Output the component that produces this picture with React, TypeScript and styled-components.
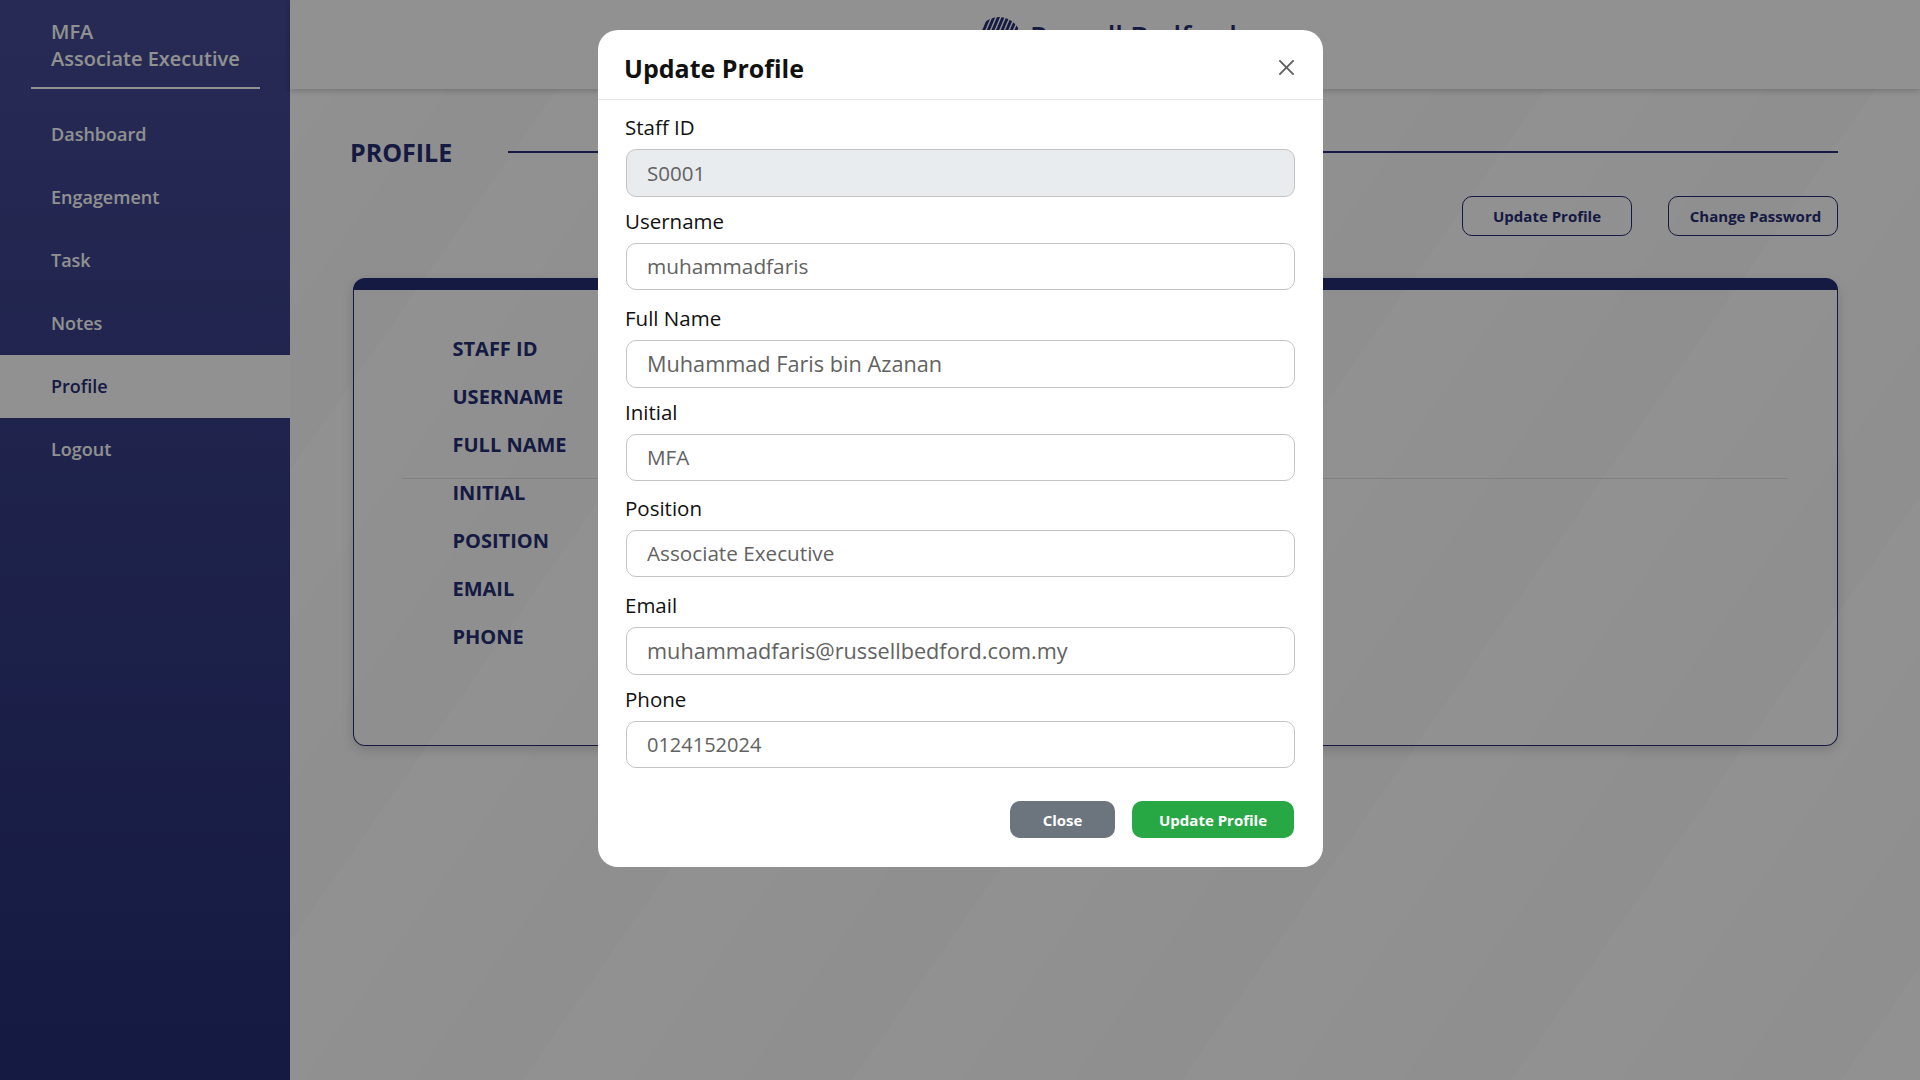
import React from 'react';
import styled, { createGlobalStyle } from 'styled-components';

const GlobalStyle = createGlobalStyle`
  * {
    box-sizing: border-box;
  }
  body {
    margin: 0;
    font-family: "Open Sans", "Noto Sans", sans-serif;
    background: #ffffff;
    overflow: hidden;
  }
`;

const NAVY = '#252e74';

const Shell = styled.div`
  display: flex;
  width: 1920px;
  height: 1080px;
`;

const Sidebar = styled.aside`
  flex: 0 0 290px;
  display: flex;
  flex-direction: column;
  background: linear-gradient(180deg, #444b95 0%, #252e74 100%);
`;

const UserBlock = styled.div`
  margin: 0 30px 0 31px;
  padding: 18px 20px 0;
  height: 89px;
  border-bottom: 2px solid #ffffff;
  color: #ffffff;
  font-size: 20px;
  font-weight: 600;
  line-height: 27px;
  white-space: nowrap;
`;

const Nav = styled.nav`
  display: flex;
  flex-direction: column;
  margin-top: 14px;
`;

const NavItem = styled.a<{ $active?: boolean }>`
  display: flex;
  align-items: center;
  height: 63px;
  padding: 0 0 2px 51px;
  font-size: 18px;
  font-weight: 600;
  color: ${props => (props.$active ? NAVY : '#ffffff')};
  background: ${props => (props.$active ? '#ffffff' : 'transparent')};
`;

const Main = styled.main`
  flex: 1;
  display: flex;
  flex-direction: column;
  background-color: #ffffff;
  background-image: repeating-linear-gradient(
    125deg,
    rgba(0, 0, 0, 0) 0,
    rgba(0, 0, 0, 0) 90px,
    rgba(0, 0, 0, 0.008) 90px,
    rgba(0, 0, 0, 0.008) 180px,
    rgba(0, 0, 0, 0.016) 180px,
    rgba(0, 0, 0, 0.016) 270px
  );
`;

const Header = styled.header`
  height: 89px;
  display: flex;
  justify-content: center;
  gap: 9px;
  padding: 17px 0 0 4px;
  background: #ffffff;
  box-shadow: 0 2px 6px rgba(0, 0, 0, 0.2);
`;

const BrandName = styled.span`
  font-size: 27.5px;
  line-height: 38px;
  font-weight: 600;
  color: ${NAVY};
  white-space: nowrap;
`;

const Content = styled.section`
  display: flex;
  flex-direction: column;
  padding: 44px 82px 0 60px;
`;

const TitleRow = styled.div`
  display: flex;
  align-items: center;
  height: 38px;
  gap: 56px;
`;

const PageTitle = styled.h1`
  margin: 0;
  font-size: 25px;
  font-weight: 700;
  color: ${NAVY};
`;

const TitleLine = styled.div`
  flex: 1;
  height: 2.5px;
  background: ${NAVY};
`;

const Actions = styled.div`
  display: flex;
  justify-content: flex-end;
  gap: 36px;
  margin-top: 25px;
`;

const OutlineButton = styled.button<{ $shift?: number }>`
  width: 170px;
  height: 40px;
  padding: 0 0 0 ${props => props.$shift ?? 0}px;
  border: 1.5px solid ${NAVY};
  border-radius: 10px;
  background: transparent;
  color: ${NAVY};
  font-family: inherit;
  font-size: 15px;
  font-weight: 700;
`;

const Card = styled.div`
  position: relative;
  margin: 42px 0 0 3px;
  height: 468px;
  padding: 35px 0 0 98.5px;
  border: 1.5px solid ${NAVY};
  border-top-width: 12px;
  border-radius: 12px;
  box-shadow: 0 4px 12px rgba(0, 0, 0, 0.15);
`;

const CardRule = styled.div`
  position: absolute;
  top: 188px;
  left: 48px;
  right: 49px;
  height: 1px;
  background: rgba(0, 0, 0, 0.1);
`;

const DetailLabel = styled.div`
  height: 48px;
  line-height: 48px;
  font-size: 20px;
  font-weight: 700;
  color: ${NAVY};
`;

const Overlay = styled.div`
  position: fixed;
  inset: 0;
  display: flex;
  justify-content: center;
  align-items: flex-start;
  padding: 30px 0 0 1px;
  background: rgba(0, 0, 0, 0.43);
`;

const Modal = styled.div`
  width: 725px;
  height: 837px;
  background: #ffffff;
  border-radius: 20px;
`;

const ModalHeader = styled.div`
  height: 70px;
  display: flex;
  align-items: center;
  justify-content: space-between;
  padding: 6px 29px 0 26px;
  border-bottom: 1px solid #e5e5e5;
`;

const ModalTitle = styled.h2`
  margin: 0;
  font-size: 25px;
  font-weight: 700;
  color: #111111;
`;

const CloseIcon = styled.svg`
  width: 15px;
  height: 15px;
  fill: #000000;
  opacity: 0.62;
`;

const ModalBody = styled.div`
  padding: 0 28px;
`;

const Field = styled.div<{ $gap: number }>`
  display: flex;
  flex-direction: column;
  margin-top: ${props => props.$gap}px;
`;

const FieldLabel = styled.label`
  height: 35px;
  margin-left: -1px;
  font-size: 20.5px;
  font-weight: 500;
  line-height: 27px;
  color: #111111;
`;

const FieldInput = styled.input<{ $h: number; $size: number }>`
  width: 100%;
  height: ${props => props.$h}px;
  padding: 0 20px 1px;
  border: 1.5px solid #c4c4c4;
  border-radius: 10px;
  font-family: inherit;
  font-size: ${props => props.$size}px;
  font-weight: 500;
  color: #626262;
  background: #ffffff;
  outline: none;

  &:disabled {
    background: #e9ecef;
    opacity: 1;
    -webkit-text-fill-color: #626262;
  }
`;

const ModalFooter = styled.div`
  display: flex;
  justify-content: flex-end;
  gap: 17px;
  margin: 33px 1px 0 0;
`;

const SolidButton = styled.button<{ $variant: 'grey' | 'green' }>`
  width: ${props => (props.$variant === 'grey' ? 105 : 162)}px;
  height: 37px;
  padding: 0;
  border: none;
  border-radius: 10px;
  background: ${props => (props.$variant === 'grey' ? '#6c757d' : '#28a745')};
  color: #ffffff;
  font-family: inherit;
  font-size: 15px;
  font-weight: 700;
`;

const StripedLogo = () => (
  <svg width="44" height="44" viewBox="0 0 44 44">
    <defs>
      <clipPath id="logo-circle">
        <circle cx="22" cy="22" r="22" />
      </clipPath>
    </defs>
    <g clipPath="url(#logo-circle)" stroke={NAVY} strokeWidth="2.8">
      {Array.from({ length: 16 }, (_, i) => (
        <line key={i} x1={-8 + i * 4.6} y1="48" x2={14 + i * 4.6} y2="-4" />
      ))}
    </g>
  </svg>
);

const navItems = ['Dashboard', 'Engagement', 'Task', 'Notes', 'Profile', 'Logout'];
const detailLabels = ['STAFF ID', 'USERNAME', 'FULL NAME', 'INITIAL', 'POSITION', 'EMAIL', 'PHONE'];

const fields = [
  { label: 'Staff ID', value: 'S0001', gap: 14, h: 48, size: 20.5, disabled: true },
  { label: 'Username', value: 'muhammadfaris', gap: 11, h: 47, size: 20.8 },
  { label: 'Full Name', value: 'Muhammad Faris bin Azanan', gap: 15, h: 48, size: 21.7 },
  { label: 'Initial', value: 'MFA', gap: 11, h: 47, size: 20.7 },
  { label: 'Position', value: 'Associate Executive', gap: 14, h: 47, size: 20.7 },
  { label: 'Email', value: 'muhammadfaris@russellbedford.com.my', gap: 15, h: 48, size: 21.7 },
  { label: 'Phone', value: '0124152024', gap: 11, h: 47, size: 20 },
];

export default function App() {
  return (
    <>
      <GlobalStyle />
      <Shell>
        <Sidebar>
          <UserBlock>
            MFA
            <br />
            Associate Executive
          </UserBlock>
          <Nav>
            {navItems.map(item => (
              <NavItem key={item} $active={item === 'Profile'}>
                {item}
              </NavItem>
            ))}
          </Nav>
        </Sidebar>
        <Main>
          <Header>
            <StripedLogo />
            <BrandName>Russell Bedford</BrandName>
          </Header>
          <Content>
            <TitleRow>
              <PageTitle>PROFILE</PageTitle>
              <TitleLine />
            </TitleRow>
            <Actions>
              <OutlineButton>Update Profile</OutlineButton>
              <OutlineButton $shift={5}>Change Password</OutlineButton>
            </Actions>
            <Card>
              <CardRule />
              {detailLabels.map(label => (
                <DetailLabel key={label}>{label}</DetailLabel>
              ))}
            </Card>
          </Content>
        </Main>
      </Shell>
      <Overlay>
        <Modal>
          <ModalHeader>
            <ModalTitle>Update Profile</ModalTitle>
            <CloseIcon viewBox="0 0 16 16">
              <path d="M.293.293a1 1 0 0 1 1.414 0L8 6.586 14.293.293a1 1 0 1 1 1.414 1.414L9.414 8l6.293 6.293a1 1 0 0 1-1.414 1.414L8 9.414l-6.293 6.293a1 1 0 0 1-1.414-1.414L6.586 8 .293 1.707a1 1 0 0 1 0-1.414z" />
            </CloseIcon>
          </ModalHeader>
          <ModalBody>
            {fields.map(field => (
              <Field key={field.label} $gap={field.gap}>
                <FieldLabel>{field.label}</FieldLabel>
                <FieldInput
                  $h={field.h}
                  $size={field.size}
                  value={field.value}
                  disabled={field.disabled}
                  readOnly
                />
              </Field>
            ))}
            <ModalFooter>
              <SolidButton $variant="grey">Close</SolidButton>
              <SolidButton $variant="green">Update Profile</SolidButton>
            </ModalFooter>
          </ModalBody>
        </Modal>
      </Overlay>
    </>
  );
}
